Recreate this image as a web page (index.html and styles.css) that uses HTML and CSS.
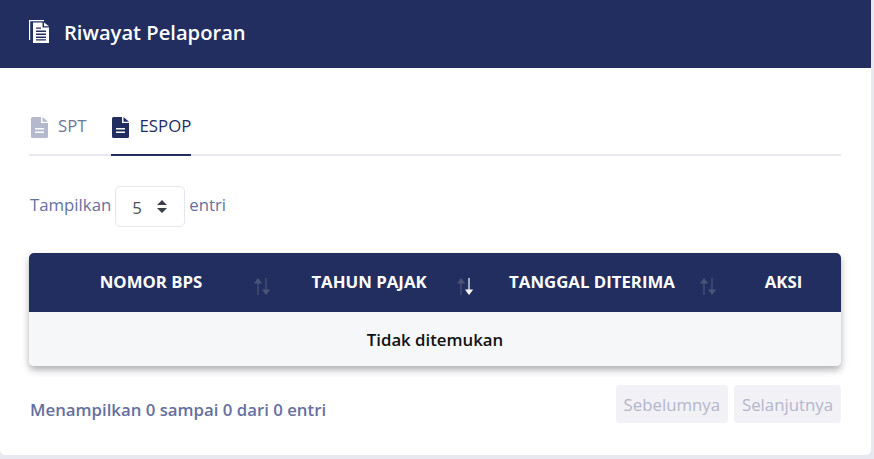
FILE: index.html
```html
<!DOCTYPE html>
<html lang="id">
<head>
<meta charset="utf-8">
<title>Riwayat Pelaporan</title>
<link rel="stylesheet" href="styles.css">
</head>
<body>
<main class="card">
  <header class="card-header">
    <svg class="header-icon" viewBox="0 0 20 23" width="20" height="23" aria-hidden="true">
      <path fill="#fff" d="M0 0h15v1.200H1.200V20H0z"/>
      <path fill="#fff" d="M4 2.500h9.500v5H20V23H4z"/>
      <path fill="#fff" d="M15 2.500l5 3.800h-5z"/>
      <path fill="#222e5f" d="M7 7.500h5v1.200H7zM7 10.500h10v1.400H7zM7 13.500h10v1.400H7zM7 16.500h10v1.400H7zM7 19.300h10v1.200H7z"/>
    </svg>
    <h1 class="card-title">Riwayat Pelaporan</h1>
  </header>
  <div class="card-body">
    <nav class="tabs">
      <a class="tab">
        <svg class="tab-icon" viewBox="0 0 17 21" width="17" height="21" aria-hidden="true"><path fill="#b5b9cd" fill-rule="evenodd" d="M1.500 0H10v6h7v13.500a1.500 1.500 0 0 1-1.500 1.500h-14A1.500 1.500 0 0 1 0 19.500v-18A1.500 1.500 0 0 1 1.500 0zM11.500 0L17 4.700h-5.500zM4 11v1.500h9V11zM4 14.500V16h9v-1.500z"/></svg>
        <span class="tab-label">SPT</span>
      </a>
      <a class="tab tab-active">
        <svg class="tab-icon" viewBox="0 0 17 21" width="17" height="21" aria-hidden="true"><path fill="#222e5f" fill-rule="evenodd" d="M1.500 0H10v6h7v13.500a1.500 1.500 0 0 1-1.500 1.500h-14A1.500 1.500 0 0 1 0 19.500v-18A1.500 1.500 0 0 1 1.500 0zM11.500 0L17 4.700h-5.500zM4 11v1.500h9V11zM4 14.500V16h9v-1.500z"/></svg>
        <span class="tab-label">ESPOP</span>
      </a>
    </nav>
    <div class="length-row">
      <span>Tampilkan</span>
      <div class="select-box">
        <span>5</span>
        <svg class="select-caret" viewBox="0 0 10 13" width="10" height="13" aria-hidden="true"><path fill="#3b3f4a" d="M5 0l5 5H0zM0 8h10l-5 5z"/></svg>
      </div>
      <span>entri</span>
    </div>
    <table class="data-table">
      <colgroup>
        <col class="col-a"><col class="col-b"><col class="col-c"><col class="col-d">
      </colgroup>
      <thead>
        <tr>
          <th class="th-first">NOMOR BPS
            <svg class="sort" viewBox="0 0 16 17" width="16" height="17" aria-hidden="true"><path class="sort-dim" d="M4 17V2M1 5l3-4 3 4zM12 0v15M9 12l3 4 3-4z"/></svg>
          </th>
          <th>TAHUN PAJAK
            <svg class="sort" viewBox="0 0 16 17" width="16" height="17" aria-hidden="true"><path class="sort-dim" d="M4 17V2M1 5l3-4 3 4z"/><path class="sort-on" d="M12 0v15M9 12l3 4 3-4z"/></svg>
          </th>
          <th>TANGGAL DITERIMA
            <svg class="sort" viewBox="0 0 16 17" width="16" height="17" aria-hidden="true"><path class="sort-dim" d="M4 17V2M1 5l3-4 3 4zM12 0v15M9 12l3 4 3-4z"/></svg>
          </th>
          <th class="th-last">AKSI</th>
        </tr>
      </thead>
      <tbody>
        <tr><td colspan="4">Tidak ditemukan</td></tr>
      </tbody>
    </table>
    <footer class="table-footer">
      <div class="info">Menampilkan 0 sampai 0 dari 0 entri</div>
      <div class="pager">
        <button class="page-btn" disabled>Sebelumnya</button>
        <button class="page-btn" disabled>Selanjutnya</button>
      </div>
    </footer>
  </div>
</main>
</body>
</html>
```

FILE: styles.css
```css
* { box-sizing: border-box; }
html, body { margin: 0; height: 459px; overflow: hidden; }
body {
  background: #e8e8f1;
  font-family: "Open Sans", "Noto Sans", sans-serif;
  font-size: 16.8px;
  color: #6570a0;
}
.card {
  width: 871px;
  height: 455px;
  background: #fff;
  border-radius: 0 0 5px 5px;
  overflow: hidden;
}
.card-header {
  height: 68px;
  background: #222e5f;
  display: flex;
  align-items: center;
  padding: 0 29px;
  gap: 15px;
}
.header-icon { margin-top: -5px; }
.card-title {
  margin: 0 0 4px;
  font-size: 20.16px;
  line-height: 27px;
  font-weight: 600;
  color: #fff;
}
.card-body { padding: 0 30px 0 29px; }
.tabs {
  display: flex;
  gap: 24px;
  height: 88px;
  padding-top: 30px;
  border-bottom: 2px solid #e8e8f1;
}
.tab {
  display: flex;
  align-items: flex-start;
  gap: 10px;
  height: 58px;
  padding: 19px 0 0 2px;
  line-height: 20px;
  color: #6f7795;
}
.tab-label { margin-top: -1px; }
.tab-icon { flex: none; }
.tab-active {
  gap: 11px;
  color: #222e5f;
  border-bottom: 2px solid #222e5f;
  padding-left: 1px;
}
.length-row {
  display: flex;
  align-items: center;
  gap: 4px;
  margin-top: 30px;
  padding-left: 1px;
  height: 41px;
  line-height: 22px;
}
.length-row > span { margin-top: -3px; }
.select-box {
  width: 70px;
  height: 41px;
  border: 1px solid #e6e6f0;
  border-radius: 5px;
  display: flex;
  align-items: center;
  justify-content: space-between;
  padding: 0 17px 0 16px;
  color: #495057;
}
.select-box span { margin-top: 3px; }
.data-table {
  width: 812px;
  margin-top: 26px;
  table-layout: fixed;
  border-collapse: separate;
  border-spacing: 0;
  border-radius: 5px;
  box-shadow: 0 4px 7px rgba(50, 50, 60, .38);
}
.col-a { width: 249px; }
.col-b { width: 203px; }
.col-c { width: 243px; }
.col-d { width: 117px; }
.data-table th {
  position: relative;
  height: 59px;
  background: #222e5f;
  color: #fff;
  font-size: 16.8px;
  font-weight: 700;
  text-align: center;
  padding: 0 21px 3px 0;
  white-space: nowrap;
}
.data-table th.th-first {
  border-top-left-radius: 5px;
  padding-right: 5px;
}
.data-table th.th-last {
  border-top-right-radius: 5px;
  padding: 0 0 3px 2px;
}
.sort {
  position: absolute;
  right: 8px;
  top: 25px;
}
.sort-dim { fill: #4c5579; stroke: #4c5579; stroke-width: 1.200; }
.sort-on { fill: #fff; stroke: #fff; stroke-width: 1.200; }
.data-table td {
  height: 54px;
  background: #f6f7f9;
  color: #111;
  font-size: 16.8px;
  font-weight: 600;
  text-align: center;
  padding: 1px 0 0;
  border-radius: 0 0 5px 5px;
}
.table-footer {
  display: flex;
  justify-content: space-between;
  align-items: flex-start;
  margin-top: 19px;
}
.info {
  margin: 14px 0 0 1px;
  font-weight: 600;
  line-height: 22px;
}
.pager { display: flex; gap: 6px; }
.page-btn {
  height: 38px;
  padding: 0 8px;
  border: 0;
  border-radius: 4px;
  background: #f1f1f6;
  color: #b4b6cb;
  font-family: inherit;
  font-size: 16.8px;
}
```
